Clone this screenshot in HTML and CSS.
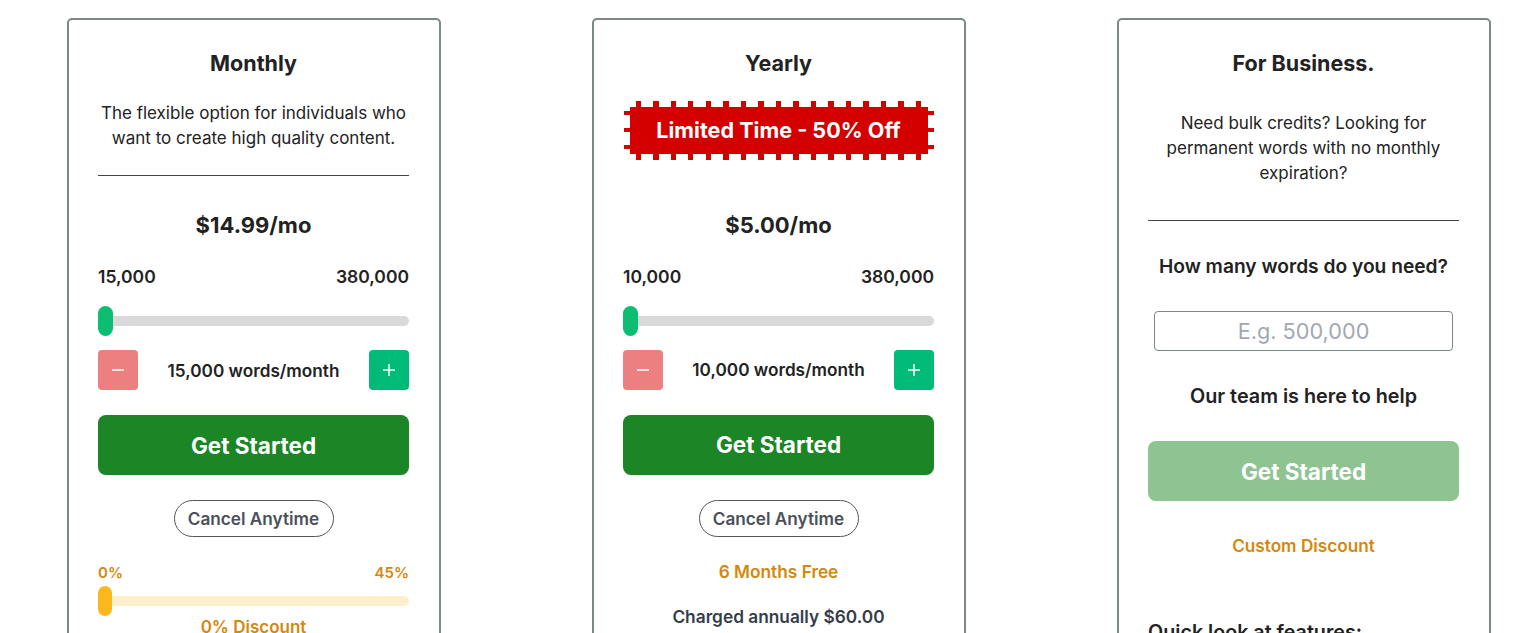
FILE: index.html
```html
<!DOCTYPE html>
<html lang="en">
<head>
<meta charset="utf-8">
<title>Pricing</title>
<link rel="stylesheet" href="styles.css">
</head>
<body>
<main class="plans">
  <section class="card">
    <h2 class="title">Monthly</h2>
    <p class="desc">The flexible option for individuals who<br>want to create high quality content.</p>
    <hr class="divider">
    <div class="price">$14.99/mo</div>
    <div class="range-labels"><span>15,000</span><span>380,000</span></div>
    <div class="slider"><div class="track"></div><div class="thumb"></div></div>
    <div class="stepper">
      <button class="step minus" type="button" aria-label="decrease"><svg width="14" height="14" viewBox="0 0 14 14"><path d="M1 7h12" stroke="#fff" stroke-width="1.6"/></svg></button>
      <span class="words">15,000 words/month</span>
      <button class="step plus" type="button" aria-label="increase"><svg width="14" height="14" viewBox="0 0 14 14"><path d="M1 7h12M7 1v12" stroke="#fff" stroke-width="1.6"/></svg></button>
    </div>
    <button class="cta" type="button">Get Started</button>
    <div class="pill-row"><span class="pill">Cancel Anytime</span></div>
    <div class="disc-labels"><span>0%</span><span>45%</span></div>
    <div class="slider disc"><div class="track"></div><div class="thumb"></div></div>
    <div class="disc-text">0% Discount</div>
  </section>

  <section class="card">
    <h2 class="title">Yearly</h2>
    <div class="badge-row"><div class="badge"><span class="badge-inner">Limited Time - 50% Off</span></div></div>
    <div class="price yearly-price">$5.00/mo</div>
    <div class="range-labels"><span>10,000</span><span>380,000</span></div>
    <div class="slider"><div class="track"></div><div class="thumb"></div></div>
    <div class="stepper">
      <button class="step minus" type="button" aria-label="decrease"><svg width="14" height="14" viewBox="0 0 14 14"><path d="M1 7h12" stroke="#fff" stroke-width="1.6"/></svg></button>
      <span class="words">10,000 words/month</span>
      <button class="step plus" type="button" aria-label="increase"><svg width="14" height="14" viewBox="0 0 14 14"><path d="M1 7h12M7 1v12" stroke="#fff" stroke-width="1.6"/></svg></button>
    </div>
    <button class="cta" type="button">Get Started</button>
    <div class="pill-row"><span class="pill">Cancel Anytime</span></div>
    <div class="free">6 Months Free</div>
    <div class="charged">Charged annually $60.00</div>
  </section>

  <section class="card">
    <h2 class="title">For Business.</h2>
    <p class="desc biz-desc">Need bulk credits? Looking for<br>permanent words with no monthly<br>expiration?</p>
    <hr class="divider biz-divider">
    <div class="question">How many words do you need?</div>
    <div class="input-row"><input class="words-input" type="text" placeholder="E.g. 500,000"></div>
    <div class="help">Our team is here to help</div>
    <button class="cta cta-light" type="button">Get Started</button>
    <div class="custom">Custom Discount</div>
    <div class="features">Quick look at features:</div>
  </section>
</main>
</body>
</html>
```
FILE: styles.css
```css
* { box-sizing: border-box; }
html, body { margin: 0; padding: 0; background: #fff; }
body {
  font-family: "Inter", "Noto Sans", "Liberation Sans", sans-serif;
  color: #222;
  overflow: hidden;
  height: 633px;
}
.plans {
  display: flex;
  gap: 151px;
  padding: 18px 0 0 67px;
}
.card {
  width: 374px;
  height: 760px;
  flex: none;
  border: 2px solid #7b8883;
  border-radius: 5px;
  padding: 27.5px 30px 0 29px;
  display: flex;
  flex-direction: column;
}
.title {
  margin: 0;
  font-size: 21.5px;
  line-height: 30px;
  font-weight: 700;
  text-align: center;
  color: #222;
}
.desc {
  margin: 23.5px 0 0;
  font-size: 17px;
  line-height: 25px;
  text-align: center;
  color: #222;
  white-space: nowrap;
}
.biz-desc { margin-top: 33.5px; }
.divider {
  margin: 24px 0 0;
  border: 0;
  height: 1px;
  flex: none;
  background: #444;
}
.biz-divider { margin-top: 34px; }
.price {
  margin-top: 34px;
  font-size: 22px;
  line-height: 30px;
  font-weight: 700;
  text-align: center;
}
.yearly-price { margin-top: 50px; }
.range-labels {
  margin-top: 25px;
  display: flex;
  justify-content: space-between;
  font-size: 17.5px;
  line-height: 24px;
  font-weight: 600;
}
.slider {
  margin-top: 17px;
  height: 30px;
  flex: none;
  display: grid;
  align-items: center;
}
.track, .thumb { grid-area: 1 / 1; }
.track {
  height: 10px;
  border-radius: 5px;
  background: #d9d9d9;
}
.thumb {
  width: 15px;
  height: 30px;
  border-radius: 8px;
  background: #0cbd72;
  justify-self: start;
}
.stepper {
  margin-top: 14px;
  height: 40px;
  flex: none;
  display: flex;
  align-items: center;
  justify-content: space-between;
}
.step {
  width: 40px;
  height: 40px;
  border: 0;
  border-radius: 4px;
  padding: 0;
  display: flex;
  align-items: center;
  justify-content: center;
}
.minus { background: #ec8080; }
.plus { background: #00bb77; }
.words {
  font-size: 17.2px;
  font-weight: 600;
  color: #222;
}
.cta {
  margin-top: 25px;
  height: 60px;
  width: 100%;
  flex: none;
  border: 0;
  border-radius: 8px;
  background: #1c8526;
  color: #fff;
  font-family: inherit;
  font-size: 22.5px;
  font-weight: 700;
}
.cta-light { margin-top: 32px; background: #8dc492; }
.pill-row {
  margin-top: 25px;
  display: flex;
  justify-content: center;
}
.pill {
  width: 160px;
  height: 37px;
  border: 1px solid #555;
  border-radius: 19px;
  display: flex;
  align-items: center;
  justify-content: center;
  font-size: 17.2px;
  font-weight: 600;
  color: #4b5058;
}
.disc-labels {
  margin-top: 26px;
  display: flex;
  justify-content: space-between;
  font-size: 15px;
  line-height: 20px;
  font-weight: 600;
  color: #d4880c;
}
.slider.disc { margin-top: 3px; }
.disc .track { background: #fdefcc; }
.disc .thumb { background: #fbb81c; width: 14px; }
.disc-text {
  font-size: 17px;
  line-height: 22px;
  font-weight: 600;
  text-align: center;
  color: #d4880c;
}
.badge-row {
  margin-top: 23px;
  display: flex;
  justify-content: center;
}
.badge {
  width: 310px;
  height: 59px;
  padding: 6px;
  background:
    repeating-linear-gradient(90deg, #d40000 0 5px, transparent 5px 17.5px) top left 12px / calc(100% - 18px) 6px no-repeat,
    repeating-linear-gradient(90deg, #d40000 0 5px, transparent 5px 17.5px) bottom left 12px / calc(100% - 18px) 6px no-repeat,
    repeating-linear-gradient(180deg, transparent 0 10px, #d40000 10px 14px, transparent 14px 16.8px) left top / 6px 100% no-repeat,
    repeating-linear-gradient(180deg, transparent 0 10px, #d40000 10px 14px, transparent 14px 16.8px) right top / 6px 100% no-repeat;
}
.badge-inner {
  display: flex;
  align-items: center;
  justify-content: center;
  height: 100%;
  background: #d40000;
  color: #fff;
  font-size: 21.6px;
  font-weight: 700;
}
.free {
  margin-top: 23px;
  font-size: 17.3px;
  line-height: 24px;
  font-weight: 600;
  text-align: center;
  color: #d4880c;
}
.charged {
  margin-top: 21px;
  font-size: 17.3px;
  line-height: 24px;
  font-weight: 600;
  text-align: center;
  color: #333d4a;
}
.question {
  margin-top: 32px;
  font-size: 19.2px;
  line-height: 26px;
  font-weight: 600;
  text-align: center;
}
.input-row {
  margin-top: 32px;
  display: flex;
  justify-content: center;
}
.words-input {
  width: 299px;
  height: 40px;
  border: 1px solid #7b8883;
  border-radius: 4px;
  text-align: center;
  font-family: inherit;
  font-size: 21.7px;
  color: #222;
  outline: none;
}
.words-input::placeholder { color: #a3a8b0; }
.help {
  margin-top: 32px;
  font-size: 19.8px;
  line-height: 26px;
  font-weight: 600;
  text-align: center;
}
.custom {
  margin-top: 33px;
  font-size: 17.2px;
  line-height: 24px;
  font-weight: 600;
  text-align: center;
  color: #d4880c;
}
.features {
  margin-top: 61px;
  font-size: 19.7px;
  line-height: 26px;
  font-weight: 600;
  color: #222;
}
```
